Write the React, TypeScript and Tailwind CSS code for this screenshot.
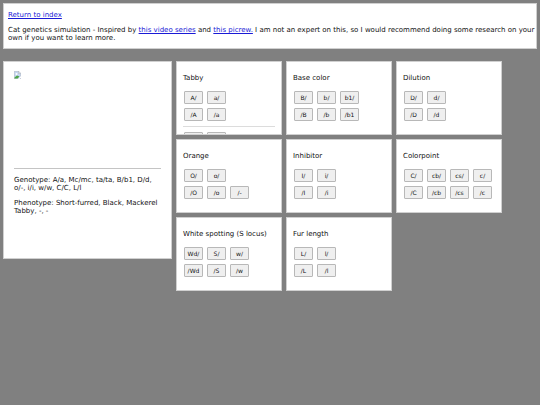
import { Fragment } from "react";

type Gene = {
  title: string;
  // each group is a pair of rows, groups are split by a rule
  groups: string[][][];
};

const genes: Gene[] = [
  {
    title: "Tabby",
    groups: [
      [["A/", "a/"], ["/A", "/a"]],
      [["Mc/", "mc/"]],
    ],
  },
  { title: "Base color", groups: [[["B/", "b/", "b1/"], ["/B", "/b", "/b1"]]] },
  { title: "Dilution", groups: [[["D/", "d/"], ["/D", "/d"]]] },
  { title: "Orange", groups: [[["O/", "o/"], ["/O", "/o", "/-"]]] },
  { title: "Inhibitor", groups: [[["I/", "i/"], ["/I", "/i"]]] },
  { title: "Colorpoint", groups: [[["C/", "cb/", "cs/", "c/"], ["/C", "/cb", "/cs", "/c"]]] },
  { title: "White spotting (S locus)", groups: [[["Wd/", "S/", "w/"], ["/Wd", "/S", "/w"]]] },
  { title: "Fur length", groups: [[["L/", "l/"], ["/L", "/l"]]] },
];

function GeneCard({ title, groups }: Gene) {
  return (
    <section className="w-[106px] h-[74px] overflow-hidden border border-[#d0d0d0] bg-white px-1.5 pt-3">
      <h2 className="mb-2 whitespace-nowrap leading-[9px]">{title}</h2>
      {groups.map((rows, i) => (
        <Fragment key={i}>
          {i > 0 && <hr className="my-[5px] border-[#dcdcdc]" />}
          <div className="flex flex-col gap-1 pl-px">
            {rows.map((row, j) => (
              <div key={j} className="flex gap-1">
                {row.map((allele) => (
                  <button
                    key={allele}
                    type="button"
                    className="flex h-[13px] w-[19px] items-center justify-center rounded-[1px] border border-[#b8b8b8] bg-[#efefef] text-[6px] leading-none"
                  >
                    {allele}
                  </button>
                ))}
              </div>
            ))}
          </div>
        </Fragment>
      ))}
    </section>
  );
}

function CatImage() {
  return (
    <svg role="img" aria-label="Cat" width="7" height="8" viewBox="0 0 14 16">
      <path d="M0.5 0.5H9L13.5 5V15.5H0.5Z" fill="#c5d6f2" stroke="#a3a9b3" />
      <path d="M9 0.5V5H13.5Z" fill="#fff" stroke="#a3a9b3" />
      <circle cx="5" cy="6" r="2" fill="#fff" />
      <path d="M1 15V13L6 9L11 11L7 15Z" fill="#4fa548" />
      <path d="M8 16L14 10V13L11 16Z" fill="#fff" />
    </svg>
  );
}

export default function App() {
  return (
    <div className="min-h-screen bg-[#808080] p-[3px] font-['DejaVu_Sans',sans-serif] text-[7px] leading-[8px] text-[#111]">
      <header className="border border-[#d0d0d0] bg-white pl-1 pt-[7px] pb-1.5">
        <p>
          <a href="#index" className="text-[#1a1ad6] underline">Return to index</a>
        </p>
        <p className="mt-[7px]">
          Cat genetics simulation - Inspired by{" "}
          <a href="#video" className="text-[#1a1ad6] underline">this video series</a> and{" "}
          <a href="#picrew" className="text-[#1a1ad6] underline">this picrew.</a> I am not an expert on
          this, so I would recommend doing some research on your own if you want to learn more.
        </p>
      </header>

      <main className="mt-3 flex items-start gap-1">
        <section className="h-[198px] w-[169px] shrink-0 border border-[#d0d0d0] bg-white px-2.5 pt-[9px]">
          <div className="h-[97px]">
            <CatImage />
          </div>
          <hr className="border-[#c4c4c4]" />
          <p className="mt-[7px]">Genotype: A/a, Mc/mc, ta/ta, B/b1, D/d, o/-, i/i, w/w, C/C, L/l</p>
          <p className="mt-[7px]">Phenotype: Short-furred, Black, Mackerel Tabby, -, -</p>
        </section>

        <div className="flex max-w-[330px] flex-wrap gap-1">
          {genes.map((gene) => (
            <GeneCard key={gene.title} {...gene} />
          ))}
        </div>
      </main>
    </div>
  );
}
